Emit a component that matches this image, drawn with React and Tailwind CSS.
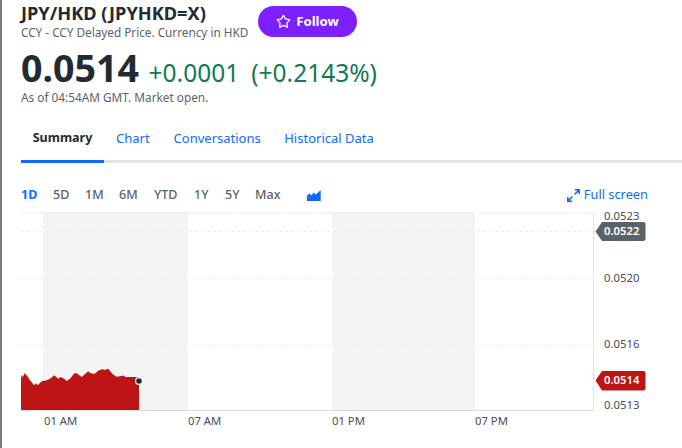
import React from "react";
import { Star } from "lucide-react";

const ranges = [
    { label: "1D", w: "w-[32px]", active: true },
    { label: "5D", w: "w-[32px]" },
    { label: "1M", w: "w-[34px]" },
    { label: "6M", w: "w-[35px]" },
    { label: "YTD", w: "w-[40px]" },
    { label: "1Y", w: "w-[31px]" },
    { label: "5Y", w: "w-[30px]" },
    { label: "Max", w: "w-[38px]" },
];

const area =
    "M21,410 L21,378.7 L21.7,374.7 L22.7,377 L24.7,373.3 L26.7,375.3 L30,380.3 L34.3,385.3 L35.7,383.3 L37.7,385.3 L41.7,381.3 L46.7,380.3 L50,378.7 L54.3,375.3 L58.3,378.7 L60.7,377 L65,379.3 L66.7,381 L70,378.7 L74.3,373.3 L76.7,373.3 L81.7,377 L88.3,371.3 L90.3,373 L94.3,374 L98.3,370.7 L102.3,369 L104.3,370 L108.3,368.7 L113.3,374.7 L116.7,376.7 L123.3,375.7 L125.7,377 L139,377 L139,410 Z";

const gridY = [231, 278, 345];

const App = () => {
    return (
        <div className="w-[682px] h-[448px] bg-white border-l-2 border-[#7a7a7a] font-['Noto_Sans',sans-serif] overflow-hidden">
            <div className="pl-[19px]">
                {/* title */}
                <div className="flex items-start h-[46px]">
                    <div className="pt-[3px] w-[237px]">
                        <h1 className="text-[18.2px] leading-[20px] font-bold text-[#232a31] whitespace-nowrap">JPY/HKD (JPYHKD=X)</h1>
                        <div className="text-[11.75px] leading-[15px] mt-[2px] text-[#5b636a] whitespace-nowrap">CCY - CCY Delayed Price. Currency in HKD</div>
                    </div>
                    <button className="mt-[6px] w-[99px] h-[31px] rounded-full bg-[#7e1fff] text-white text-[13.2px] font-bold flex items-center justify-center gap-[5px]">
                        <Star size={15} strokeWidth={2} />
                        Follow
                    </button>
                </div>

                {/* quote */}
                <div className="flex items-baseline h-[38px] pt-[7px] whitespace-nowrap">
                    <span className="text-[37.6px] leading-[30px] font-bold text-[#232a31]">0.0514</span>
                    <span className="ml-[9.5px] text-[24.5px] leading-[30px] text-[#0f7b52]">+0.0001</span>
                    <span className="ml-[12px] text-[24.5px] leading-[30px] text-[#0f7b52]">(+0.2143%)</span>
                </div>
                <div className="text-[11.8px] leading-[15px] mt-[6px] text-[#5b636a]">As of 04:54AM GMT. Market open.</div>

                {/* tabs */}
                <div className="mt-[12px] flex h-[46px] border-b-[3px] border-[#e0e4e9] text-[13px] whitespace-nowrap">
                    <div className="w-[83px] h-[46px] border-b-[3px] border-[#0f69ff] flex items-center justify-center font-bold text-[#232a31] text-[12.5px]">Summary</div>
                    <div className="ml-[12px] h-[43px] flex items-center text-[#0f69ff]">Chart</div>
                    <div className="ml-[24px] h-[43px] flex items-center text-[#0f69ff]">Conversations</div>
                    <div className="ml-[23.5px] h-[43px] flex items-center text-[#0f69ff]">Historical Data</div>
                </div>

                {/* range picker */}
                <div className="flex items-center h-[30px] mt-[17px] text-[12.5px] font-medium text-[#5b636a] whitespace-nowrap">
                    {ranges.map((r) => (
                        <div key={r.label} className={`${r.w} ${r.active ? "font-bold text-[#0f69ff]" : ""}`}>{r.label}</div>
                    ))}
                    <svg width="14" height="11" viewBox="0 0 14 11" className="ml-[14px]">
                        <path d="M0,11 L0,5.5 L2.5,3.5 L4.5,5.5 L6.5,2.5 L8.5,4.5 L10,3.5 L13.7,0 L13.7,11 Z" fill="#0f69ff" />
                    </svg>
                    <div className="ml-auto mr-[34px] flex items-center gap-[4px] font-normal text-[#0f69ff] text-[12.8px]">
                        <svg width="13" height="13" viewBox="0 0 13 13" fill="none" stroke="#0f69ff" strokeWidth="1.6">
                            <path d="M7.5,5.5 L11.8,1.2 M8,0.8 L12.2,0.8 L12.2,5 M5.5,7.5 L1.2,11.8 M0.8,8 L0.8,12.2 L5,12.2" />
                        </svg>
                        Full screen
                    </div>
                </div>
            </div>

            {/* chart: page coordinates minus the 2px left border */}
            <div className="relative h-[236px] mt-[2px] w-[680px] text-[11.3px] text-[#464e56]">
                <svg width="680" height="236" viewBox="2 212 680 236" className="absolute left-0 top-0">
                    <rect x="43" y="212" width="145" height="198" fill="#f4f4f4" />
                    <rect x="332" y="212" width="143" height="198" fill="#f4f4f4" />
                    <line x1="21" x2="593" y1="212.5" y2="212.5" stroke="#f0f0f0" />
                    {gridY.map((y) => (
                        <line key={y} x1="21" x2="593" y1={y + 0.5} y2={y + 0.5} stroke="#eeeeee" strokeDasharray="3 3" />
                    ))}
                    <path d={area} fill="#bd1414" />
                    <line x1="21" x2="593.5" y1="410.5" y2="410.5" stroke="#dcdce6" />
                    <line x1="593.5" x2="593.5" y1="212" y2="411" stroke="#e4e4ec" />
                    <circle cx="139" cy="381" r="3.4" fill="#232a31" stroke="#ffffff" strokeWidth="1.2" />
                    <path d="M595.5,231.5 L602,222 L644,222 L645.5,223.5 L645.5,239.5 L644,241 L602,241 Z" fill="#5b636a" />
                    <path d="M595.5,380.5 L602,371 L644,371 L645.5,372.5 L645.5,389 L644,390.5 L602,390.5 Z" fill="#bd1414" />
                </svg>

                <div className="absolute left-[602px] top-[-3px] leading-[13px]">0.0523</div>
                <div className="absolute left-[602px] top-[12px] leading-[14px] font-semibold text-white">0.0522</div>
                <div className="absolute left-[602px] top-[58px] leading-[16px]">0.0520</div>
                <div className="absolute left-[602px] top-[124px] leading-[16px]">0.0516</div>
                <div className="absolute left-[602px] top-[160px] leading-[16px] font-semibold text-white">0.0514</div>
                <div className="absolute left-[602px] top-[185px] leading-[16px]">0.0513</div>

                <div className="absolute left-[42px] top-[201px] leading-[16px]">01 AM</div>
                <div className="absolute left-[186px] top-[201px] leading-[16px]">07 AM</div>
                <div className="absolute left-[330px] top-[201px] leading-[16px]">01 PM</div>
                <div className="absolute left-[473px] top-[201px] leading-[16px]">07 PM</div>
            </div>
        </div>
    );
};

export default App;
